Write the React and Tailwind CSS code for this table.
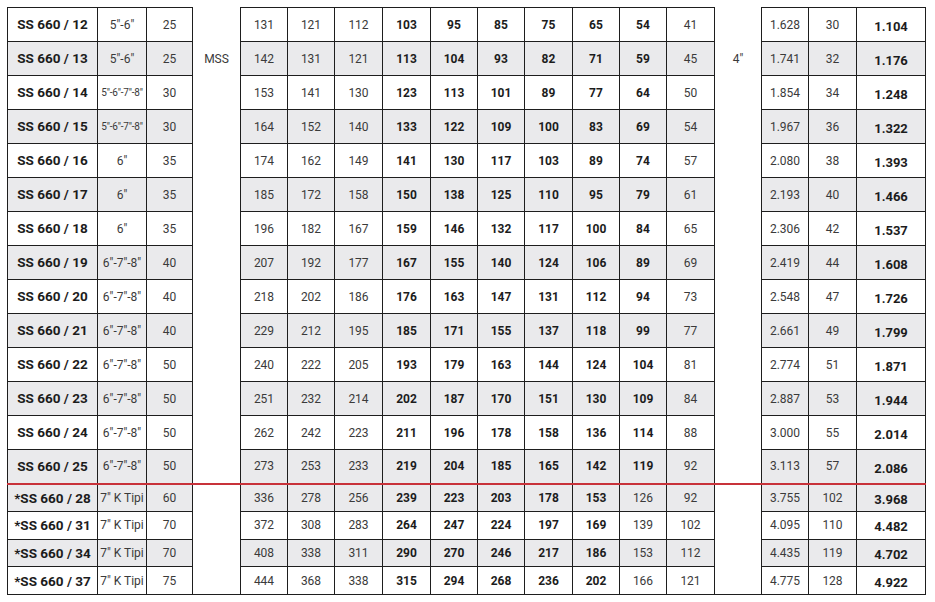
import React from "react";

const rows = [
  ["SS 660 / 12", "5\"-6\"", 25, [131, 121, 112, 103, 95, 85, 75, 65, 54, 41], "1.628", 30, "1.104"],
  ["SS 660 / 13", "5\"-6\"", 25, [142, 131, 121, 113, 104, 93, 82, 71, 59, 45], "1.741", 32, "1.176"],
  ["SS 660 / 14", "5\"-6\"-7\"-8\"", 30, [153, 141, 130, 123, 113, 101, 89, 77, 64, 50], "1.854", 34, "1.248"],
  ["SS 660 / 15", "5\"-6\"-7\"-8\"", 30, [164, 152, 140, 133, 122, 109, 100, 83, 69, 54], "1.967", 36, "1.322"],
  ["SS 660 / 16", "6\"", 35, [174, 162, 149, 141, 130, 117, 103, 89, 74, 57], "2.080", 38, "1.393"],
  ["SS 660 / 17", "6\"", 35, [185, 172, 158, 150, 138, 125, 110, 95, 79, 61], "2.193", 40, "1.466"],
  ["SS 660 / 18", "6\"", 35, [196, 182, 167, 159, 146, 132, 117, 100, 84, 65], "2.306", 42, "1.537"],
  ["SS 660 / 19", "6\"-7\"-8\"", 40, [207, 192, 177, 167, 155, 140, 124, 106, 89, 69], "2.419", 44, "1.608"],
  ["SS 660 / 20", "6\"-7\"-8\"", 40, [218, 202, 186, 176, 163, 147, 131, 112, 94, 73], "2.548", 47, "1.726"],
  ["SS 660 / 21", "6\"-7\"-8\"", 40, [229, 212, 195, 185, 171, 155, 137, 118, 99, 77], "2.661", 49, "1.799"],
  ["SS 660 / 22", "6\"-7\"-8\"", 50, [240, 222, 205, 193, 179, 163, 144, 124, 104, 81], "2.774", 51, "1.871"],
  ["SS 660 / 23", "6\"-7\"-8\"", 50, [251, 232, 214, 202, 187, 170, 151, 130, 109, 84], "2.887", 53, "1.944"],
  ["SS 660 / 24", "6\"-7\"-8\"", 50, [262, 242, 223, 211, 196, 178, 158, 136, 114, 88], "3.000", 55, "2.014"],
  ["SS 660 / 25", "6\"-7\"-8\"", 50, [273, 253, 233, 219, 204, 185, 165, 142, 119, 92], "3.113", 57, "2.086"],
  ["*SS 660 / 28", "7\" K Tipi", 60, [336, 278, 256, 239, 223, 203, 178, 153, 126, 92], "3.755", 102, "3.968"],
  ["*SS 660 / 31", "7\" K Tipi", 70, [372, 308, 283, 264, 247, 224, 197, 169, 139, 102], "4.095", 110, "4.482"],
  ["*SS 660 / 34", "7\" K Tipi", 70, [408, 338, 311, 290, 270, 246, 217, 186, 153, 112], "4.435", 119, "4.702"],
  ["*SS 660 / 37", "7\" K Tipi", 75, [444, 368, 338, 315, 294, 268, 236, 202, 166, 121], "4.775", 128, "4.922"],
];

const dataWidths = ["w-[47px]", "w-[47px]", "w-[48px]", "w-[48px]", "w-[47px]", "w-[47px]", "w-[48px]", "w-[47px]", "w-[47px]", "w-[48px]"];

export default function App() {
  return (
    <div className="bg-white w-[935px] h-[602px] pt-[7px] pl-[7px] font-['Roboto',sans-serif] text-[#3a3a3a]">
      <table className="table-fixed border-collapse">
        <colgroup>
          <col className="w-[90px]" />
          <col className="w-[49px]" />
          <col className="w-[46px]" />
          <col className="w-[48px]" />
          {dataWidths.map((w, i) => (
            <col key={i} className={w} />
          ))}
          <col className="w-[47px]" />
          <col className="w-[47px]" />
          <col className="w-[48px]" />
          <col className="w-[69px]" />
        </colgroup>
        <tbody>
          {rows.map((r, i) => {
            const [model, size, c, data, r1, r2, r3] = r;
            const bottom = i >= 14;
            const last = i === rows.length - 1;
            const gray = bottom ? i % 2 === 0 : i % 2 === 1;
            const bg = gray ? "bg-[#eaeaec]" : "bg-white";
            const h = bottom ? "h-[27.75px]" : "h-[34px]";
            const red = i === 14 ? "border-t-2 border-t-[#c8323a]" : "";
            const cell = `border border-[#1e1e1e] text-center p-0 ${bg} ${h} ${red}`;
            const gap = `p-0 text-center bg-white ${red} ${last ? "border-b border-b-[#1e1e1e]" : ""}`;
            const boldUntil = bottom ? 7 : 8;
            const sizeSmall = size.length > 9 && size.startsWith("5");
            return (
              <tr key={model}>
                <td className={`${cell} font-bold text-[13.5px] text-[#1c1c1c] whitespace-nowrap`}>{model}</td>
                <td className={`${cell} whitespace-nowrap ${sizeSmall ? "text-[10px] tracking-[-0.2px]" : "text-[12px]"}`}>{size}</td>
                <td className={`${cell} text-[12px]`}>{c}</td>
                <td className={`${gap} text-[12px]`}>{i === 1 ? "MSS" : ""}</td>
                {data.map((d, j) => (
                  <td
                    key={j}
                    className={`${cell} text-[12px] ${j >= 3 && j <= boldUntil ? "font-bold text-[#1c1c1c]" : ""}`}
                  >
                    {d}
                  </td>
                ))}
                <td className={`${gap} text-[12px]`}>{i === 1 ? "4\"" : ""}</td>
                <td className={`${cell} text-[12px]`}>{r1}</td>
                <td className={`${cell} text-[12px]`}>{r2}</td>
                <td className={`${cell} font-bold text-[13px] text-[#1c1c1c]`}>
                  <span className="relative top-[2px]">{r3}</span>
                </td>
              </tr>
            );
          })}
        </tbody>
      </table>
    </div>
  );
}
